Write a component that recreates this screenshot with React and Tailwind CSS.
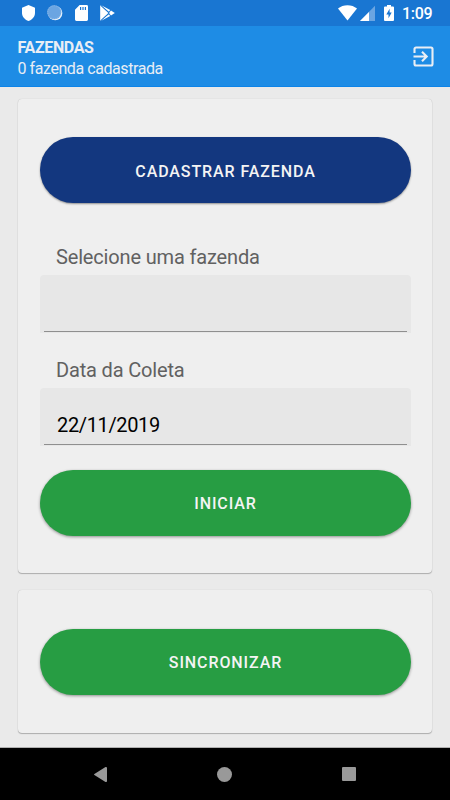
import { useState } from "react";

const buttonBase =
  "flex w-full h-[66px] items-center justify-center rounded-full text-[16px] font-medium tracking-[0.9px] text-[#f4f4f4]";

function StatusBar() {
  return (
    <div className="flex h-[26px] items-start bg-[#1976d2] pt-[5px] text-white">
      {/* Notifications */}
      <svg className="ml-[22px] h-4 w-[13px]" viewBox="0 0 13 16" fill="currentColor">
        <path d="M6.5 0 13 2.8V8c0 3.6-2.6 6.6-6.5 8C2.6 14.6 0 11.6 0 8V2.8z" />
      </svg>
      <svg className="ml-3 h-4 w-4" viewBox="0 0 16 16">
        <circle cx="8.2" cy="8.1" r="7.2" fill="#e6f0fa" />
        <circle cx="7.2" cy="7.2" r="7" fill="#6ba5e2" />
        <circle cx="7.2" cy="7.2" r="6.5" fill="none" stroke="#8dbaea" strokeWidth="1" strokeDasharray="1 1" />
      </svg>
      <svg className="ml-3 h-4 w-[13px]" viewBox="0 0 13 16">
        <path d="M4.6 0h7A1.4 1.4 0 0 1 13 1.4v13.2a1.4 1.4 0 0 1-1.4 1.4H1.4A1.4 1.4 0 0 1 0 14.6V4.7z" fill="#fff" />
        <path d="M5.6 2v3M8 2v3M10.4 2v3" stroke="#1976d2" strokeWidth="1.2" />
      </svg>
      <svg className="ml-3 h-4 w-[15px]" viewBox="0 0 15 16">
        <path d="M.2.3v15.4L8.4 8z" fill="#fff" />
        <path d="M1.2.2 10.2 5 8.8 6.8zM1.2 15.8 10.2 11 8.8 9.2z" fill="#fff" />
        <path d="M11 5.6 14.8 8 11 10.400 8.800 8z" fill="#fff" />
        <path d="M1.200 1 9.500 8 1.200 15" fill="none" stroke="#1976d2" strokeWidth=".6" />
      </svg>

      {/* System */}
      <svg className="ml-[223px] h-4 w-[19px]" viewBox="0 0 19 16" fill="currentColor">
        <path d="M9.5 15.6 0 3.6C2.6 1.4 5.9.2 9.5.2s6.9 1.2 9.5 3.4z" />
      </svg>
      <svg className="ml-[3px] h-4 w-[15px]" viewBox="0 0 15 16">
        <path d="M0 16 15 .8V16z" fill="#6aa5e2" />
        <path d="M0 16 9 6.9V16z" fill="#fff" />
      </svg>
      <svg className="ml-[9px] h-4 w-[10px]" viewBox="0 0 10 16">
        <path d="M3 0h4v1.5h2A1 1 0 0 1 10 2.5V15a1 1 0 0 1-1 1H1a1 1 0 0 1-1-1V2.5a1 1 0 0 1 1-1h2z" fill="#fff" />
        <path d="M5.6 3.800 2.300 9.400h2.200v3.800L7.700 7.600H5.600z" fill="#1976d2" />
      </svg>
      <span className="ml-[8px] text-[16px] font-medium leading-[17px] tracking-[-0.3px]">1:09</span>
    </div>
  );
}

function Header({ count }) {
  return (
    <header className="flex h-[61px] items-center justify-between border-b border-[#0d84e8] bg-[#1e8ce5] pl-[17.5px] pr-[16px]">
      <div className="pt-[3px] text-[#e9eef5]">
        <h1 className="text-[16px] font-bold leading-[21px] tracking-[-0.35px]">FAZENDAS</h1>
        <p className="text-[16px] leading-[21px] tracking-[-0.43px]">{count} fazenda cadastrada</p>
      </div>
      <button type="button" aria-label="Sair">
        <svg className="h-[21px] w-[21px]" viewBox="0 0 21 21" fill="none" stroke="#e9eef5" strokeWidth="2.1">
          <path d="M1.500 7V3A1.500 1.500 0 0 1 3 1.500h15A1.500 1.500 0 0 1 19.500 3v15a1.500 1.500 0 0 1-1.500 1.500H3A1.500 1.500 0 0 1 1.500 18v-4" />
          <path d="M.5 10.500H14M9 5.800l4.700 4.700L9 15.200" />
        </svg>
      </button>
    </header>
  );
}

function Field({ id, label, value, onChange }) {
  return (
    <div>
      <label htmlFor={id} className="block pl-4 text-[20px] leading-6 tracking-[-0.16px] text-[#616161]">
        {label}
      </label>
      <div className="mt-[6px] h-[58px] rounded-t bg-[#e7e7e7] px-1">
        <input
          id={id}
          type="text"
          value={value}
          onChange={(e) => onChange(e.target.value)}
          className="h-[57px] w-full border-b border-[#8f8f8f] pl-[13px] pt-[17px] text-[20px] tracking-[-0.36px] text-black outline-none"
        />
      </div>
    </div>
  );
}

export default function App() {
  const [farm, setFarm] = useState("");
  const [date, setDate] = useState("22/11/2019");

  return (
    <div className="flex h-[800px] w-[450px] flex-col overflow-hidden bg-[#eaeaea] font-['Roboto',sans-serif]">
      <StatusBar />
      <Header count={0} />

      <main className="flex flex-1 flex-col gap-[17px] px-[18px] pt-3">
        {/* Collection form */}
        <section className="h-[474px] rounded bg-[#efefef] pl-[22px] pr-[21px] pt-[38px] shadow-[0_1px_1px_rgba(0,0,0,0.25),0_0_1px_rgba(0,0,0,0.2)]">
          <button type="button" className={`${buttonBase} bg-[#13377f] pt-[3px] shadow-[0_1px_2px_rgba(0,0,0,0.4)]`}>
            CADASTRAR FAZENDA
          </button>
          <div className="mt-[42px] flex flex-col gap-[25px]">
            <Field id="farm" label="Selecione uma fazenda" value={farm} onChange={setFarm} />
            <Field id="date" label="Data da Coleta" value={date} onChange={setDate} />
          </div>
          <button type="button" className={`${buttonBase} mt-6 bg-[#279d43] pt-px shadow-[0_1px_3px_rgba(0,0,0,0.4)]`}>
            INICIAR
          </button>
        </section>

        {/* Sync */}
        <section className="h-[143px] rounded bg-[#efefef] pl-[22px] pr-[21px] pt-[39px] shadow-[0_1px_1px_rgba(0,0,0,0.25),0_0_1px_rgba(0,0,0,0.2)]">
          <button type="button" className={`${buttonBase} bg-[#279d43] pt-px shadow-[0_1px_3px_rgba(0,0,0,0.4)]`}>
            SINCRONIZAR
          </button>
        </section>
      </main>

      {/* Navigation bar */}
      <nav className="flex h-[53px] items-center border-t border-[#b0b0b0] bg-black">
        <svg className="ml-[94px] h-[15px] w-[13px]" viewBox="0 0 13 15" fill="#999">
          <path d="M12 0a1 1 0 0 1 1 1v13a1 1 0 0 1-1.500.9L.4 8a.6.6 0 0 1 0-1L11.500.1z" />
        </svg>
        <div className="ml-[110px] h-[15px] w-[15px] rounded-full bg-[#999]" />
        <div className="ml-[110px] h-[14px] w-[14px] rounded-[1px] bg-[#999]" />
      </nav>
    </div>
  );
}
